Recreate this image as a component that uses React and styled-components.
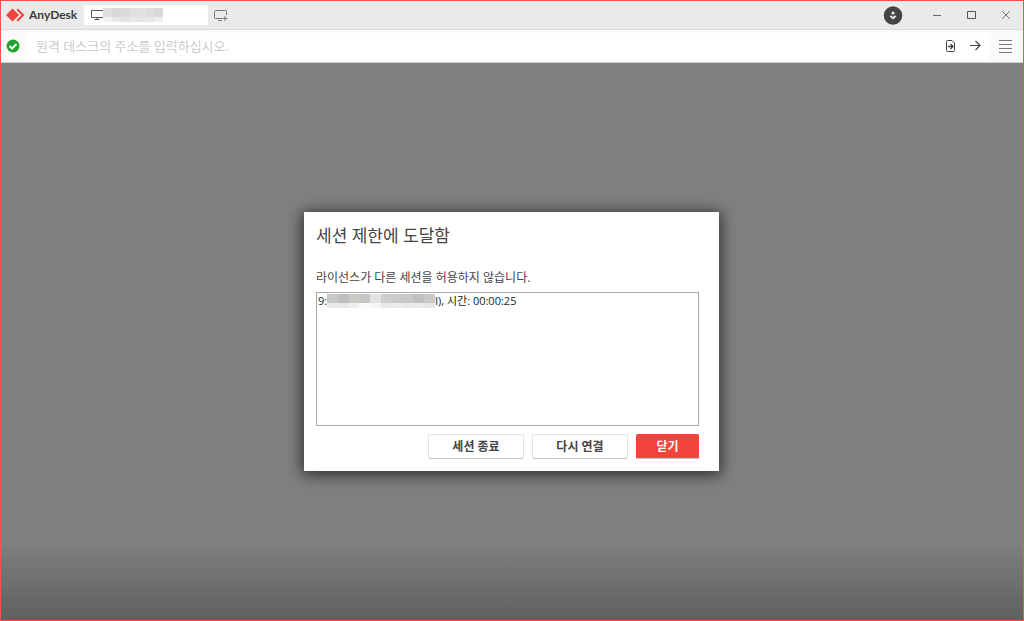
import React from "react";
import styled, { createGlobalStyle } from "styled-components";

const GlobalStyle = createGlobalStyle`
  * {
    box-sizing: border-box;
  }

  body {
    margin: 0;
    font-family: "Open Sans", "Noto Sans CJK KR", sans-serif;
    color: #444;
  }

  button,
  input {
    font: inherit;
    color: inherit;
  }
`;

const StyledWindow = styled.div`
  display: flex;
  flex-direction: column;
  min-height: 100vh;
  border: 1px solid #f4524b;
`;

const TitleBar = styled.header`
  display: flex;
  align-items: center;
  height: 29px;
  padding-left: 5px;
  background-color: #eaeaea;
  border-bottom: 1px solid #dcdcdc;
`;

const Brand = styled.div`
  display: flex;
  align-items: center;
  gap: 4px;
  width: 78px;
  font-family: Lato, sans-serif;
  font-size: 12px;
  font-weight: 700;
  line-height: 16px;
  color: #3a3a3a;
`;

const Tab = styled.button`
  display: flex;
  align-items: center;
  width: 124px;
  height: 20px;
  padding: 0 7px;
  border: 0;
  border-radius: 2px;
  background-color: #fff;
`;

const IconButton = styled.button`
  display: flex;
  align-items: center;
  justify-content: center;
  flex-shrink: 0;
  width: ${(props) => props.$width || 24}px;
  height: 24px;
  padding: 0;
  border: 0;
  background: none;
`;

const WindowControls = styled.div`
  display: flex;
  align-items: center;
  margin-left: auto;
`;

const AddressBar = styled.form`
  display: flex;
  align-items: center;
  height: 33px;
  padding: 0 5px;
  background-color: #fafafa;
  border-bottom: 1px solid #d0d0d0;
`;

const AddressField = styled.div`
  display: flex;
  align-items: center;
  flex: 1;
  height: 26px;
  margin: 0 5px 0 6px;
  padding-right: 2px;
  border-radius: 2px;
  background-color: #fff;

  input {
    flex: 1;
    min-width: 0;
    height: 26px;
    padding: 0 10px;
    border: 0;
    outline: 0;
    background: none;
    font-size: 13px;

    &::placeholder {
      color: #ccc;
      opacity: 1;
    }
  }
`;

const Stage = styled.main`
  display: flex;
  flex: 1;
  align-items: center;
  justify-content: center;
  padding: 24px 25px 24px 24px;
  background: linear-gradient(to top, #606060, #808080 80px);
`;

const Dialog = styled.section`
  width: 415px;
  max-width: 100%;
  padding: 12px 20px 12px 12px;
  background-color: #fff;
  box-shadow: 0 2px 14px 2px rgba(0, 0, 0, 0.65);

  h1 {
    margin: 0 0 20px;
    font-size: 17px;
    font-weight: 400;
    line-height: 24px;
  }

  p {
    margin: 0 0 4px;
    font-size: 12px;
    line-height: 20px;
  }
`;

const SessionList = styled.ul`
  height: 134px;
  margin: 0 0 8px;
  padding: 0 1px;
  border: 1px solid #aaa;
  list-style: none;
  font-size: 11px;
  line-height: 16px;
  color: #222;

  li {
    display: flex;
    align-items: center;
  }
`;

const Actions = styled.div`
  display: flex;
  justify-content: flex-end;
  gap: 8px;
`;

const Button = styled.button`
  width: ${(props) => (props.$primary ? 63 : 96)}px;
  height: 25px;
  padding: 0;
  border: 1px solid ${(props) => (props.$primary ? "#f0443c" : "#e2e2e2")};
  border-bottom-color: #c4c4c4;
  border-radius: 2px;
  background-color: ${(props) => (props.$primary ? "#f0443c" : "#fff")};
  font-size: 12px;
  font-weight: 700;
  line-height: 16px;
  color: ${(props) => (props.$primary ? "#fff" : "#444")};
`;

const tabMosaic = [
  ["#dedede", "#d8d8d8", "#dadada", "#dfdfdf", "#e2e2e5", "#dedede", "#d8d8d8"],
  ["#f2f2f2", "#e8e8e8", "#e3e3e3", "#e9e9e9", "#e4e4e4", "#e8e8e8", "#eeeeee"],
];

const sessionMosaic = [
  ["#c8c8ca", "#bebec0", "#cbc9c6", "#c6c6c9", "#e2e2e4", "#d0cecd", "#cccac8", "#c9c9c9", "#c2c0bf", "#c8c8c8"],
  ["#e9e9e9", "#e9e9e9", "#eeeeee", "#fafafa", "#f5f5f5", "#e9e9e9", "#ececec", "#e8e8e8", "#ebebeb", "#e6e6e6"],
];

const Mosaic = ({ rows, width, heights }) => {
  const cell = width / rows[0].length;
  return (
    <svg width={width} height={heights[0] + heights[1]} shapeRendering="crispEdges" aria-hidden="true">
      {rows.map((row, y) =>
        row.map((fill, x) => (
          <rect key={`${x}-${y}`} x={x * cell} y={y * heights[0]} width={cell} height={heights[y]} fill={fill} />
        ))
      )}
    </svg>
  );
};

const Logo = () => (
  <svg width="19" height="14" viewBox="0 0 19 14" fill="#ef443b" aria-hidden="true">
    <path d="M6.5 .5 13 7l-6.500 6.500L0 7z" />
    <path d="M10.500 2 12 .5 18.500 7 12 13.500 10.500 12l5-5z" />
  </svg>
);

const App = () => {
  return (
    <>
      <GlobalStyle />
      <StyledWindow>
        <TitleBar>
          <Brand>
            <Logo />
            AnyDesk
          </Brand>
          <Tab type="button" aria-label="Session">
            <svg width="12" height="14" viewBox="0 0 12 14" fill="none" stroke="#555" aria-hidden="true">
              <path d="M12 2.500H.5v7H12M6 9.500v2M3.500 11.500h5" />
            </svg>
            <Mosaic rows={tabMosaic} width={60} heights={[9, 5]} />
          </Tab>
          <IconButton type="button" aria-label="New tab" $width={26}>
            <svg width="14" height="12" viewBox="0 0 14 12" fill="none" stroke="#777" aria-hidden="true">
              <path d="M12.500 6V2.500q0-1-1-1h-10q-1 0-1 1v6q0 1 1 1H8M4 11.500h4M11 7v5M8.500 9.500h5" />
            </svg>
          </IconButton>
          <WindowControls>
            <IconButton type="button" aria-label="Downloads" $width={56}>
              <svg width="20" height="20" viewBox="0 0 20 20" aria-hidden="true">
                <circle cx="10" cy="10.500" r="9.300" fill="#444" />
                <circle cx="10" cy="8" r="1.500" fill="#eee" />
                <path d="m7.300 10.800 2.700 2.400 2.700-2.400" fill="none" stroke="#eee" strokeWidth="1.800" />
              </svg>
            </IconButton>
            <IconButton type="button" aria-label="Minimize" $width={34}>
              <svg width="10" height="10" viewBox="0 0 10 10" stroke="#666" aria-hidden="true">
                <path d="M0 5.500h8" />
              </svg>
            </IconButton>
            <IconButton type="button" aria-label="Maximize" $width={34}>
              <svg width="10" height="10" viewBox="0 0 10 10" fill="none" stroke="#555" aria-hidden="true">
                <path d="M.5 1.500h8v7h-8z" />
              </svg>
            </IconButton>
            <IconButton type="button" aria-label="Close" $width={34}>
              <svg width="10" height="10" viewBox="0 0 10 10" stroke="#777" aria-hidden="true">
                <path d="m1 1 8 8M9 1 1 9" />
              </svg>
            </IconButton>
          </WindowControls>
        </TitleBar>

        <AddressBar onSubmit={(e) => e.preventDefault()}>
          <svg width="14" height="14" viewBox="0 0 14 14" fill="none" aria-hidden="true">
            <circle cx="7" cy="7" r="6.500" fill="#1fa32c" />
            <path d="m3.500 7 2.500 2.500 4.500-4.500" stroke="#fff" strokeWidth="2" />
          </svg>
          <AddressField>
            <input type="text" aria-label="Address" placeholder="원격 데스크의 주소를 입력하십시오." />
            <IconButton type="button" aria-label="File transfer">
              <svg width="10" height="12" viewBox="0 0 10 12" fill="none" stroke="#444" aria-hidden="true">
                <path d="M.5 1.500q0-1 1-1H6L8.500 3v7.500q0 1-1 1h-6q-1 0-1-1z" />
                <path d="M2 6.500h5M4.500 4l2.500 2.500L4.500 9" strokeWidth="1.300" />
              </svg>
            </IconButton>
            <IconButton type="submit" aria-label="Connect">
              <svg width="12" height="12" viewBox="0 0 12 12" fill="none" stroke="#444" aria-hidden="true">
                <path d="M1 5.500h10M6.500 1 11 5.500 6.500 10" strokeWidth="1.200" />
              </svg>
            </IconButton>
          </AddressField>
          <IconButton type="button" aria-label="Menu">
            <svg width="14" height="14" viewBox="0 0 14 14" stroke="#777" aria-hidden="true">
              <path d="M0 1.500h13M0 5.500h13M0 9.500h13M0 13.500h13" />
            </svg>
          </IconButton>
        </AddressBar>

        <Stage>
          <Dialog role="dialog" aria-labelledby="dialog-title">
            <h1 id="dialog-title">세션 제한에 도달함</h1>
            <p>라이선스가 다른 세션을 허용하지 않습니다.</p>
            <SessionList>
              <li>
                9:
                <Mosaic rows={sessionMosaic} width={108} heights={[9, 5]} />
                l), 시간: 00:00:25
              </li>
            </SessionList>
            <Actions>
              <Button type="button">세션 종료</Button>
              <Button type="button">다시 연결</Button>
              <Button type="button" $primary>
                닫기
              </Button>
            </Actions>
          </Dialog>
        </Stage>
      </StyledWindow>
    </>
  );
};

export default App;
